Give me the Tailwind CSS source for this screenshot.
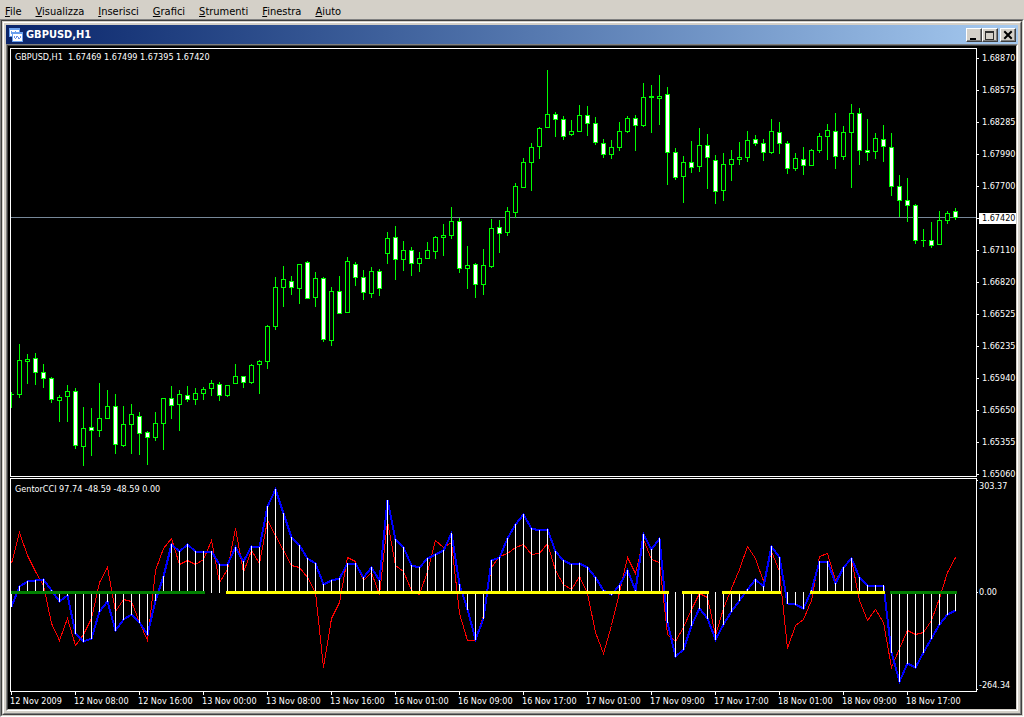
<!DOCTYPE html>
<html lang="it">
<head>
<meta charset="utf-8">
<meta name="viewport" content="width=device-width, initial-scale=1">
<title>GBPUSD,H1</title>
<script src="https://cdn.jsdelivr.net/npm/@tailwindcss/browser@4"></script>
</head>
<body class="flex h-screen min-h-[500px] flex-col overflow-hidden bg-[#d4d0c8] font-['DejaVu_Sans_Condensed','Noto_Sans',sans-serif] text-[11px] text-black">
<nav class="flex h-[19px] shrink-0 items-center gap-[14px] px-[5px] pt-1 leading-[14px]" aria-label="Menu">
  <button type="button"><u>F</u>ile</button>
  <button type="button"><u>V</u>isualizza</button>
  <button type="button"><u>I</u>nserisci</button>
  <button type="button"><u>G</u>rafici</button>
  <button type="button"><u>S</u>trumenti</button>
  <button type="button"><u>F</u>inestra</button>
  <button type="button"><u>A</u>iuto</button>
</nav>
<main class="flex min-h-0 flex-1 border border-t-[#808080] border-r-white border-b-white border-l-[#808080]">
 <div class="flex min-w-0 flex-1 border border-t-[#404040] border-r-[#d4d0c8] border-b-[#d4d0c8] border-l-[#404040]">
  <section class="flex min-w-0 flex-1 border border-t-[#d4d0c8] border-r-[#404040] border-b-[#404040] border-l-[#d4d0c8]">
   <div class="flex min-w-0 flex-1 flex-col border border-t-white border-r-[#808080] border-b-[#808080] border-l-white p-[2px]">
    <header class="flex h-[19px] shrink-0 items-center bg-linear-to-r from-[#0a246a] to-[#a6caf0] pr-[2px] pl-[3px] text-white">
      <svg class="mr-[3px] shrink-0" width="14" height="14" viewBox="0 0 14 14" shape-rendering="crispEdges" aria-hidden="true">
        <rect x="0" y="0" width="11" height="9" fill="#6aa0ee"/><rect x="1" y="2" width="9" height="6" fill="#fff"/>
        <path d="M2 3h1v3h-1zM4 4h1v2h-1zM6 3h1v2h-1z" fill="#6aa0ee"/>
        <rect x="3" y="4" width="11" height="10" fill="#6aa0ee"/><rect x="4" y="6" width="9" height="7" fill="#fff"/>
        <path d="M5 8h1v2h-1zM6 10h1v1h-1zM7 8h1v2h-1zM8 8h1v1h-1zM9 9h1v2h-1zM10 10h1v1h-1zM11 8h1v2h-1z" fill="#6a90e6"/>
      </svg>
      <h1 class="flex-1 truncate text-[11px] leading-[18px] font-bold">GBPUSD,H1</h1>
      <div class="flex items-center">
        <button type="button" aria-label="Riduci a icona" class="flex h-[14px] w-4 border border-t-white border-r-[#404040] border-b-[#404040] border-l-white bg-[#d4d0c8] shadow-[inset_-1px_-1px_0_#808080]"><svg width="14" height="12" shape-rendering="crispEdges"><path d="M3 9h6v2H3z" fill="#000"/></svg></button>
        <button type="button" aria-label="Ingrandisci" class="flex h-[14px] w-4 border border-t-white border-r-[#404040] border-b-[#404040] border-l-white bg-[#d4d0c8] shadow-[inset_-1px_-1px_0_#808080]"><svg width="14" height="12" shape-rendering="crispEdges"><path d="M2 2h9v9H2zM3 4v6h7V4z" fill="#303030" fill-rule="evenodd"/></svg></button>
        <button type="button" aria-label="Chiudi" class="ml-[2px] flex h-[14px] w-4 border border-t-white border-r-[#404040] border-b-[#404040] border-l-white bg-[#d4d0c8] shadow-[inset_-1px_-1px_0_#808080]"><svg width="14" height="12"><path d="M4 3l6 6M10 3l-6 6" stroke="#000" stroke-width="2" stroke-linecap="square"/></svg></button>
      </div>
    </header>
    <div class="flex min-h-0 flex-1 border border-t-[#808080] border-r-white border-b-white border-l-[#808080]">
     <div class="grid min-w-0 flex-1 grid-cols-[1fr_39px] grid-rows-[1fr_214px_17px] border border-t-[#404040] border-r-[#d4d0c8] border-b-[#d4d0c8] border-l-[#404040] bg-black pt-[2px] pl-[2px] text-[9px] leading-[12px] text-white">
      <figure class="relative mb-px min-h-0 min-w-0 border border-white">
        <svg id="prices" class="absolute inset-0 size-full" shape-rendering="crispEdges" role="img" aria-label="GBPUSD, H1"></svg>
        <figcaption class="relative pt-[2px] pl-[4px] text-[9px] whitespace-pre">GBPUSD,H1  1.67469 1.67499 1.67395 1.67420</figcaption>
      </figure>
      <ol id="price-axis" class="flex min-h-0 flex-col gap-5 pt-[4px]"></ol>
      <figure class="relative min-h-0 min-w-0 border border-white">
        <svg id="cci" class="absolute inset-0 size-full" shape-rendering="crispEdges" role="img" aria-label="GentorCCI"></svg>
        <figcaption class="relative pt-[4px] pl-[4px]">GentorCCI 97.74 -48.59 -48.59 0.00</figcaption>
      </figure>
      <ol class="min-h-0 pt-[2px]">
        <li class="flex h-[106px] items-start gap-px"><i class="h-px w-px bg-white"></i>303.37</li>
        <li class="flex h-[93px] items-start gap-px"><i class="mt-[6px] h-px w-px bg-white"></i>0.00</li>
        <li class="flex h-3 items-start gap-px"><i class="mt-[10px] h-px w-px bg-white"></i>-264.34</li>
      </ol>
      <ol id="time-axis" class="col-span-2 flex min-w-0 overflow-hidden"></ol>
     </div>
    </div>
   </div>
  </section>
 </div>
</main>
<script>
// One candle every 8px: [high, body top, body bottom, low, bearish]
const candles = [
[392,394,394,407,0],[344,360,394,397,0],[354,359,361,383,0],[353,358,372,384,1],[364,372,378,387,1],[377,378,399,402,1],[395,397,400,421,0],[385,391,396,421,0],[388,391,445,448,1],[407,428,446,465,0],
[408,427,430,455,1],[383,418,430,436,0],[390,406,418,418,0],[394,406,444,453,1],[406,424,445,446,0],[404,414,424,453,0],[412,416,433,454,1],[431,432,437,464,1],[412,423,437,440,0],[398,398,423,449,0],
[386,398,405,418,1],[390,394,404,430,0],[386,395,399,401,1],[388,393,399,404,0],[387,389,393,399,0],[380,383,388,395,0],[382,384,395,400,1],[385,385,395,396,0],[364,376,383,383,0],[376,376,382,387,1],
[364,365,382,383,0],[360,361,364,393,0],[325,326,361,368,0],[277,287,326,329,0],[266,279,287,306,0],[276,281,287,294,1],[264,264,288,303,0],[261,262,298,298,1],[272,278,297,306,0],[277,278,339,341,1],
[287,291,340,345,0],[276,291,313,313,1],[257,261,312,312,0],[262,264,277,285,1],[270,277,292,299,1],[267,271,293,297,0],[269,271,288,295,1],[232,238,253,263,0],[226,237,259,279,1],[241,250,259,270,0],
[247,250,263,275,1],[252,258,263,271,0],[242,250,258,258,0],[236,237,251,258,0],[224,235,237,255,0],[207,221,235,238,0],[218,221,268,272,1],[246,265,268,288,0],[263,264,284,297,1],[249,265,284,294,0],
[219,228,266,267,0],[220,227,233,252,1],[207,211,232,235,0],[183,186,212,217,0],[158,162,187,187,0],[143,147,162,190,0],[127,128,146,158,0],[70,114,127,127,0],[112,114,119,136,1],[116,119,136,139,1],
[120,131,134,135,0],[105,115,131,131,0],[106,115,123,135,1],[117,123,142,144,1],[139,143,154,157,1],[140,147,154,158,0],[122,131,147,150,0],[116,118,131,132,0],[115,118,125,150,1],[83,97,125,126,0],
[85,96,97,132,1],[75,96,98,124,0],[87,94,152,184,1],[148,152,177,179,1],[156,162,176,202,0],[141,162,167,172,1],[128,145,166,171,0],[134,145,157,188,1],[155,160,191,203,1],[153,164,190,200,0],
[150,159,164,180,0],[142,157,159,164,0],[131,140,157,161,0],[135,139,143,145,1],[139,143,152,160,1],[119,131,152,153,0],[122,132,143,153,1],[141,143,168,173,1],[153,158,168,170,0],[147,159,165,174,1],
[149,150,165,165,0],[133,136,150,152,0],[124,130,136,159,0],[113,131,156,168,1],[126,132,156,159,0],[104,113,132,187,0],[108,113,150,164,1],[119,150,152,160,1],[133,138,151,158,0],[125,139,146,161,1],
[133,147,186,195,1],[175,186,200,216,1],[178,200,205,221,1],[204,205,240,243,1],[229,240,240,246,0],[222,240,245,247,1],[211,220,244,244,0],[211,213,220,223,0],[208,211,217,219,1]];
const slow = [606,586,581,580,579,590,601,595,633,641,638,611,601,630,619,614,622,634,600,576,544,551,544,551,551,551,564,564,547,561,546,547,506,489,513,537,545,558,563,584,580,578,563,563,577,567,580,500,539,547,565,567,558,554,550,533,584,609,639,618,560,557,538,524,514,528,530,529,551,560,564,563,567,577,590,594,585,570,590,534,549,538,622,656,649,625,608,618,639,624,611,600,589,579,586,546,557,603,604,608,590,561,561,583,567,558,577,585,585,585,652,681,663,667,652,638,624,614,610];
const fast = [563,532,555,571,585,623,640,618,645,634,618,582,567,611,599,601,622,640,570,548,538,564,560,564,559,540,582,569,528,572,550,563,520,535,550,565,567,577,592,667,618,602,557,561,580,572,594,521,565,571,590,594,571,540,547,542,613,640,640,615,567,556,553,547,544,554,553,543,570,584,589,576,593,632,653,625,592,557,573,539,559,562,634,641,627,609,593,597,635,608,588,569,546,558,581,551,571,648,625,619,600,556,553,580,567,559,600,620,609,622,667,648,630,634,632,620,598,572,557];
const trend = [[11,205,'#008000'],[226,669,'#ffff00'],[682,709,'#ffff00'],[722,781,'#ffff00'],[810,885,'#ffff00'],[890,957,'#008000']];
const X = i => i * 8;

let out = '<path d="M0 168.5H4000" stroke="#778899"/>';
candles.forEach(([h, t, b, l, bear], i) => {
  const x = X(i);
  out += `<rect x="${x}" y="${h - 49}" width="1" height="${l - h + 1}" fill="#0f0"/><rect x="${x - 2}" y="${t - 49}" width="5" height="${b - t + 1}" fill="#0f0"/>`;
  if (b - t > 1) out += `<rect x="${x - 1}" y="${t - 48}" width="3" height="${b - t - 1}" fill="${bear ? '#fff' : '#000'}"/>`;
});
document.getElementById('prices').innerHTML = out;

const line = a => a.map((y, i) => `${X(i) + .5},${y - 479 + .5}`).join(' ');
out = `<polyline points="${line(fast)}" fill="none" stroke="#f00"/><polyline points="${line(slow)}" fill="none" stroke="#00f" stroke-width="2"/>`;
slow.forEach((y, i) => {
  out += `<rect x="${X(i)}" y="${Math.min(y, 592) - 479}" width="1" height="${Math.abs(y - 592) + 1}" fill="#fff"/>`;
});
trend.forEach(([a, b, c]) => { out += `<rect x="${a - 11}" y="112" width="${b - a}" height="3" fill="${c}"/>`; });
document.getElementById('cci').innerHTML = out;

document.getElementById('price-axis').innerHTML = ['1.68870','1.68575','1.68285','1.67990','1.67700','1.67420','1.67110','1.66820','1.66525','1.66235','1.65940','1.65650','1.65355','1.65060'].map(p =>
  `<li class="flex h-3 shrink-0 items-center"><i class="h-px w-[2px] bg-white"></i><span class="flex-1 pl-[3px] leading-[11px] ${p === '1.67420' ? 'bg-white text-black' : ''}">${p}</span></li>`).join('');
document.getElementById('time-axis').innerHTML = ['12 Nov 2009','12 Nov 08:00','12 Nov 16:00','13 Nov 00:00','13 Nov 08:00','13 Nov 16:00','16 Nov 01:00','16 Nov 09:00','16 Nov 17:00','17 Nov 01:00','17 Nov 09:00','17 Nov 17:00','18 Nov 01:00','18 Nov 09:00','18 Nov 17:00'].map(t =>
  `<li class="w-16 shrink-0 whitespace-nowrap"><i class="ml-px block h-[3px] w-px bg-white"></i>${t}</li>`).join('');
</script>
</body>
</html>
